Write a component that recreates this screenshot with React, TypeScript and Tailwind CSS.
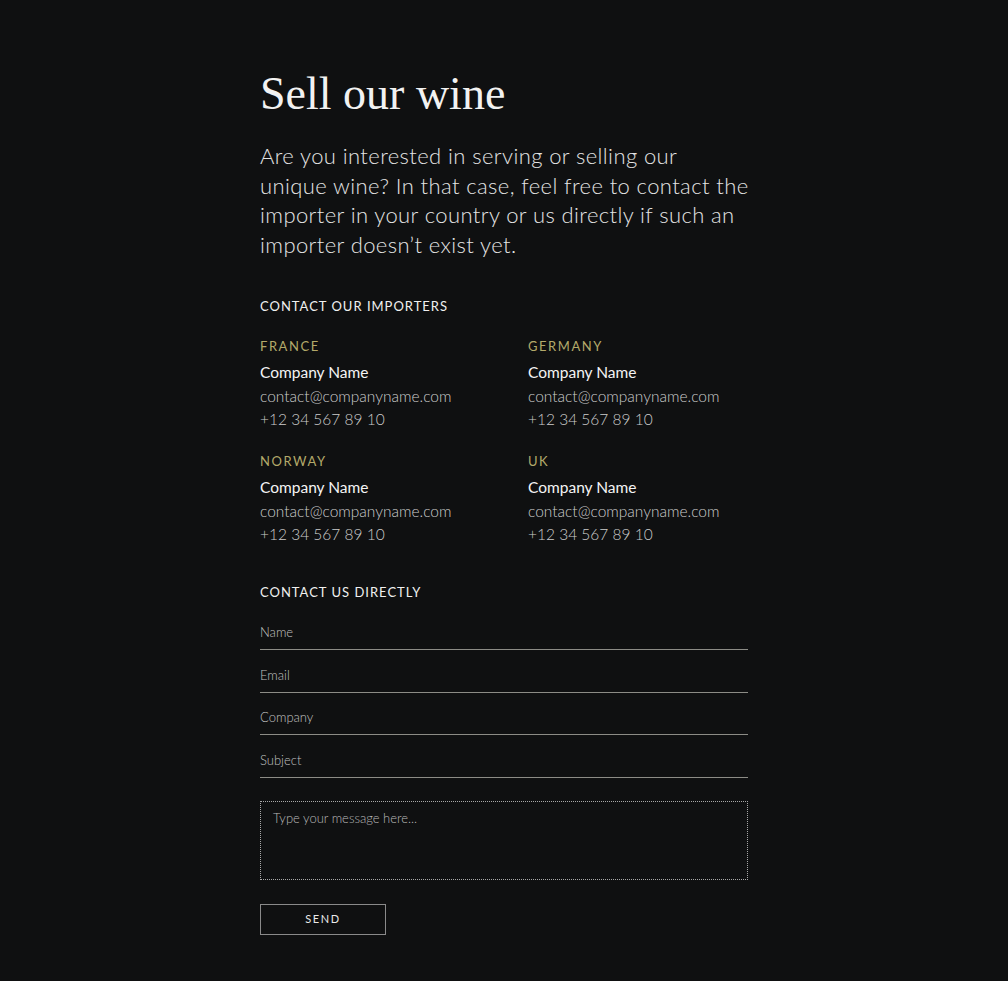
const importers = [
  { country: "France" },
  { country: "Germany" },
  { country: "Norway" },
  { country: "UK" },
];

const fields = ["Name", "Email", "Company", "Subject"];

export default function App() {
  return (
    <div className="min-h-screen bg-[#0f1011] font-['Lato',sans-serif] text-white">
      <div className="mx-auto w-[488px] pt-[68px] pb-12">
        <h1 className="font-['Liberation_Serif',serif] text-[46px] leading-[52px] font-normal text-[#f2f2f2]">
          Sell our wine
        </h1>
        <p className="mt-[21px] w-[520px] text-[22px] leading-[29.5px] font-light tracking-[0.4px] text-[#e4e4e4]">
          Are you interested in serving or selling our
          <br />
          unique wine? In that case, feel free to contact the
          <br />
          importer in your country or us directly if such an
          <br />
          importer doesn’t exist yet.
        </p>

        <h2 className="mt-[39px] text-[13px] leading-4 tracking-[1px] uppercase text-[#f0f0f0]">
          Contact our importers
        </h2>
        <div className="mt-[24px] grid grid-cols-[268px_1fr] gap-y-[21.5px]">
          {importers.map((imp) => (
            <div key={imp.country}>
              <div className="text-[13px] leading-4 tracking-[0.12em] uppercase text-[#b3a96a]">
                {imp.country}
              </div>
              <div className="mt-[7px] text-[15.5px] leading-[23.5px] text-[#f4f4f4]">Company Name</div>
              <div className="text-[15.5px] leading-[23.5px] font-light text-[#cccccc]">contact@companyname.com</div>
              <div className="text-[15.5px] leading-[23.5px] font-light text-[#cccccc]">+12 34 567 89 10</div>
            </div>
          ))}
        </div>

        <h2 className="mt-[37px] text-[13px] leading-4 tracking-[1px] uppercase text-[#f0f0f0]">
          Contact us directly
        </h2>
        <form className="mt-[8px] flex flex-col">
          {fields.map((f) => (
            <input
              key={f}
              placeholder={f}
              className="h-[42.5px] w-full border-b border-[#8c8c86] bg-transparent pt-[8px] text-[13px] font-light text-white outline-none placeholder:text-[#c0c0c0]"
            />
          ))}
          <textarea
            placeholder="Type your message here..."
            className="mt-[23px] h-[79px] w-full resize-none border border-dotted border-[#a8a8a8] bg-transparent px-[12px] py-[7px] text-[13px] font-light text-white outline-none placeholder:text-[#b8b8b8]"
          />
          <button
            type="button"
            className="mt-[24px] h-[31px] w-[126px] border border-[#8a8a8a] text-[11px] tracking-[0.15em] uppercase text-[#eaeaea]"
          >
            Send
          </button>
        </form>
      </div>
    </div>
  );
}
